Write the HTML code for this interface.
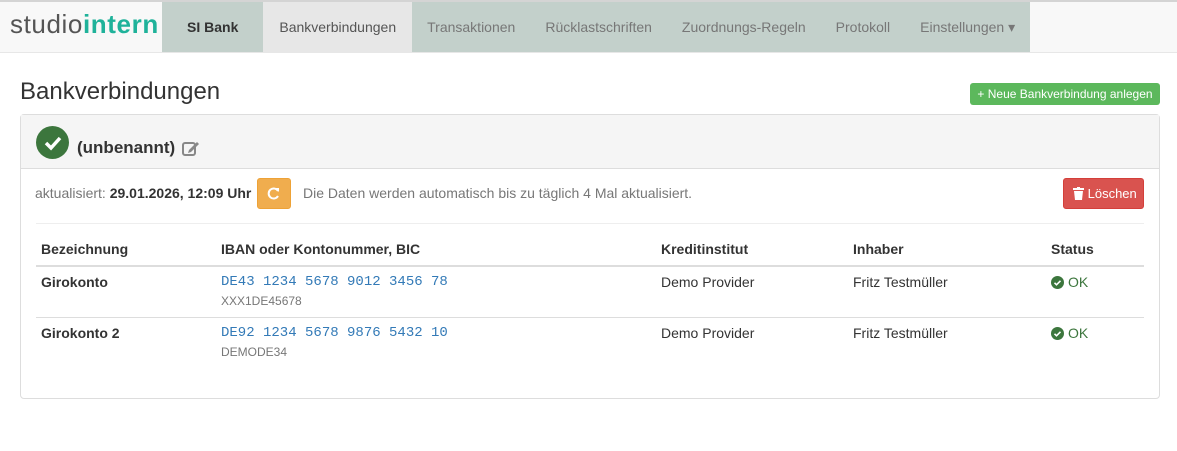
<!DOCTYPE html>
<html><head><meta charset="utf-8"><style>
*{box-sizing:border-box;margin:0;padding:0}
body{width:1177px;height:451px;background:#fff;font-family:"Liberation Sans",sans-serif;font-size:14px;color:#333;position:relative;overflow:hidden}
.nav{position:absolute;left:0;top:0;width:1177px;height:53px;background:#f8f8f8;border-top:2px solid #d4d4d4;border-bottom:1px solid #e7e7e7}
.logo{position:absolute;left:10px;top:7px;font-size:26px;color:#555;letter-spacing:0.6px}
.logo b{color:#1fb29a;font-weight:bold}
.items{position:absolute;left:162px;top:0;height:50px;display:flex;background:#c3d0cb}
.items div{height:50px;line-height:50px;padding:0 15px;color:#777;font-size:14px}
.a{font-weight:bold;color:#333!important;padding:0 25px!important}
.s{background:#e7e7e7;color:#555!important;padding:0 16px!important}
h1{position:absolute;left:20px;top:78px;font-size:24px;font-weight:normal;color:#333}
.btn-new{position:absolute;left:970px;top:83px;width:190px;height:22px;background:#5cb85c;border-radius:3px;color:#fff;font-size:12px;line-height:22px;text-align:center}
.panel{position:absolute;left:20px;top:114px;width:1140px;height:285px;border:1px solid #ddd;border-radius:4px}
.ph{height:54px;background:#f5f5f5;border-bottom:1px solid #ddd;position:relative}
.chk{position:absolute;left:15px;top:11px;width:33px;height:33px;border-radius:50%;background:#3c763d}
.ph .t{position:absolute;left:56px;top:23px;font-size:17px;font-weight:bold}
.upd{position:absolute;left:14px;top:70px;color:#777}
.upd b{color:#333}
.ref{position:absolute;left:236px;top:63px;width:34px;height:31px;background:#f0ad4e;border:1px solid #eea236;border-radius:3px}
.info{position:absolute;left:282px;top:70px;color:#777}
.del{position:absolute;left:1042px;top:63px;width:81px;height:31px;background:#d9534f;border:1px solid #d43f3a;border-radius:3px;color:#fff;font-size:13px;line-height:29px;padding-left:9px}
.hr{position:absolute;left:0;right:15px;margin-left:15px;top:108px;border-top:1px solid #eee}
table{position:absolute;left:15px;top:118px;width:1108px;border-collapse:collapse}
th{text-align:left;font-weight:bold;height:33px;padding:0 5px;border-bottom:2px solid #ddd}
td{vertical-align:top;padding:7px 5px 0;height:51px;border-top:1px solid #ddd}
td b{display:block}
.m{font-family:"Liberation Mono",monospace;color:#337ab7;font-size:14px}
.bic{font-size:12px;color:#777;margin-top:4px}
.ok{color:#3c763d}
.okc{vertical-align:-2px;margin-right:4px}
</style></head><body>
<div class="nav">
<div class="logo">studio<b>intern</b></div>
<div class="items"><div class="a">SI Bank</div><div class="s">Bankverbindungen</div><div>Transaktionen</div><div>Rücklastschriften</div><div>Zuordnungs-Regeln</div><div>Protokoll</div><div>Einstellungen ▾</div></div>
</div>
<h1>Bankverbindungen</h1>
<div class="btn-new">+ Neue Bankverbindung anlegen</div>
<div class="panel">
<div class="ph"><div class="chk"><svg width="33" height="33"><path d="M10 17l5 5 9-10" stroke="#fff" stroke-width="3.5" fill="none"/></svg></div><span class="t">(unbenannt)</span>
<svg style="position:absolute;left:161px;top:25px" width="18" height="16"><rect x="1" y="3" width="12" height="12" rx="2" fill="none" stroke="#888" stroke-width="2"/><path d="M7 10l8-8 2 2-8 8-3 1z" fill="#888"/></svg></div>
<div class="upd">aktualisiert: <b>29.01.2026, 12:09 Uhr</b></div>
<div class="ref"><svg width="32" height="29"><path d="M20 12a5 5 0 1 0 0 5" stroke="#fff" stroke-width="2" fill="none"/><path d="M17 9h4v4z" fill="#fff"/></svg></div>
<div class="info">Die Daten werden automatisch bis zu täglich 4 Mal aktualisiert.</div>
<div class="del"><svg width="11" height="13" style="vertical-align:-2px"><rect x="0" y="1" width="11" height="2" fill="#fff"/><rect x="4" y="0" width="3" height="2" fill="#fff"/><path d="M1 4h9l-1 9H2z" fill="#fff"/></svg> Löschen</div>
<div class="hr"></div>
<table>
<tr><th style="width:180px">Bezeichnung</th><th style="width:440px">IBAN oder Kontonummer, BIC</th><th style="width:192px">Kreditinstitut</th><th style="width:198px">Inhaber</th><th>Status</th></tr>
<tr><td><b>Girokonto</b></td><td><div class="m">DE43 1234 5678 9012 3456 78</div><div class="bic">XXX1DE45678</div></td><td>Demo Provider</td><td>Fritz Testmüller</td><td class="ok"><svg class="okc" width="13" height="13"><circle cx="6.5" cy="6.5" r="6.5" fill="#3c763d"/><path d="M3.5 6.8l2 2 4-4" stroke="#fff" stroke-width="1.6" fill="none"/></svg>OK</td></tr>
<tr><td><b>Girokonto 2</b></td><td><div class="m">DE92 1234 5678 9876 5432 10</div><div class="bic">DEMODE34</div></td><td>Demo Provider</td><td>Fritz Testmüller</td><td class="ok"><svg class="okc" width="13" height="13"><circle cx="6.5" cy="6.5" r="6.5" fill="#3c763d"/><path d="M3.5 6.8l2 2 4-4" stroke="#fff" stroke-width="1.6" fill="none"/></svg>OK</td></tr>
</table>
</div>
</body></html>
